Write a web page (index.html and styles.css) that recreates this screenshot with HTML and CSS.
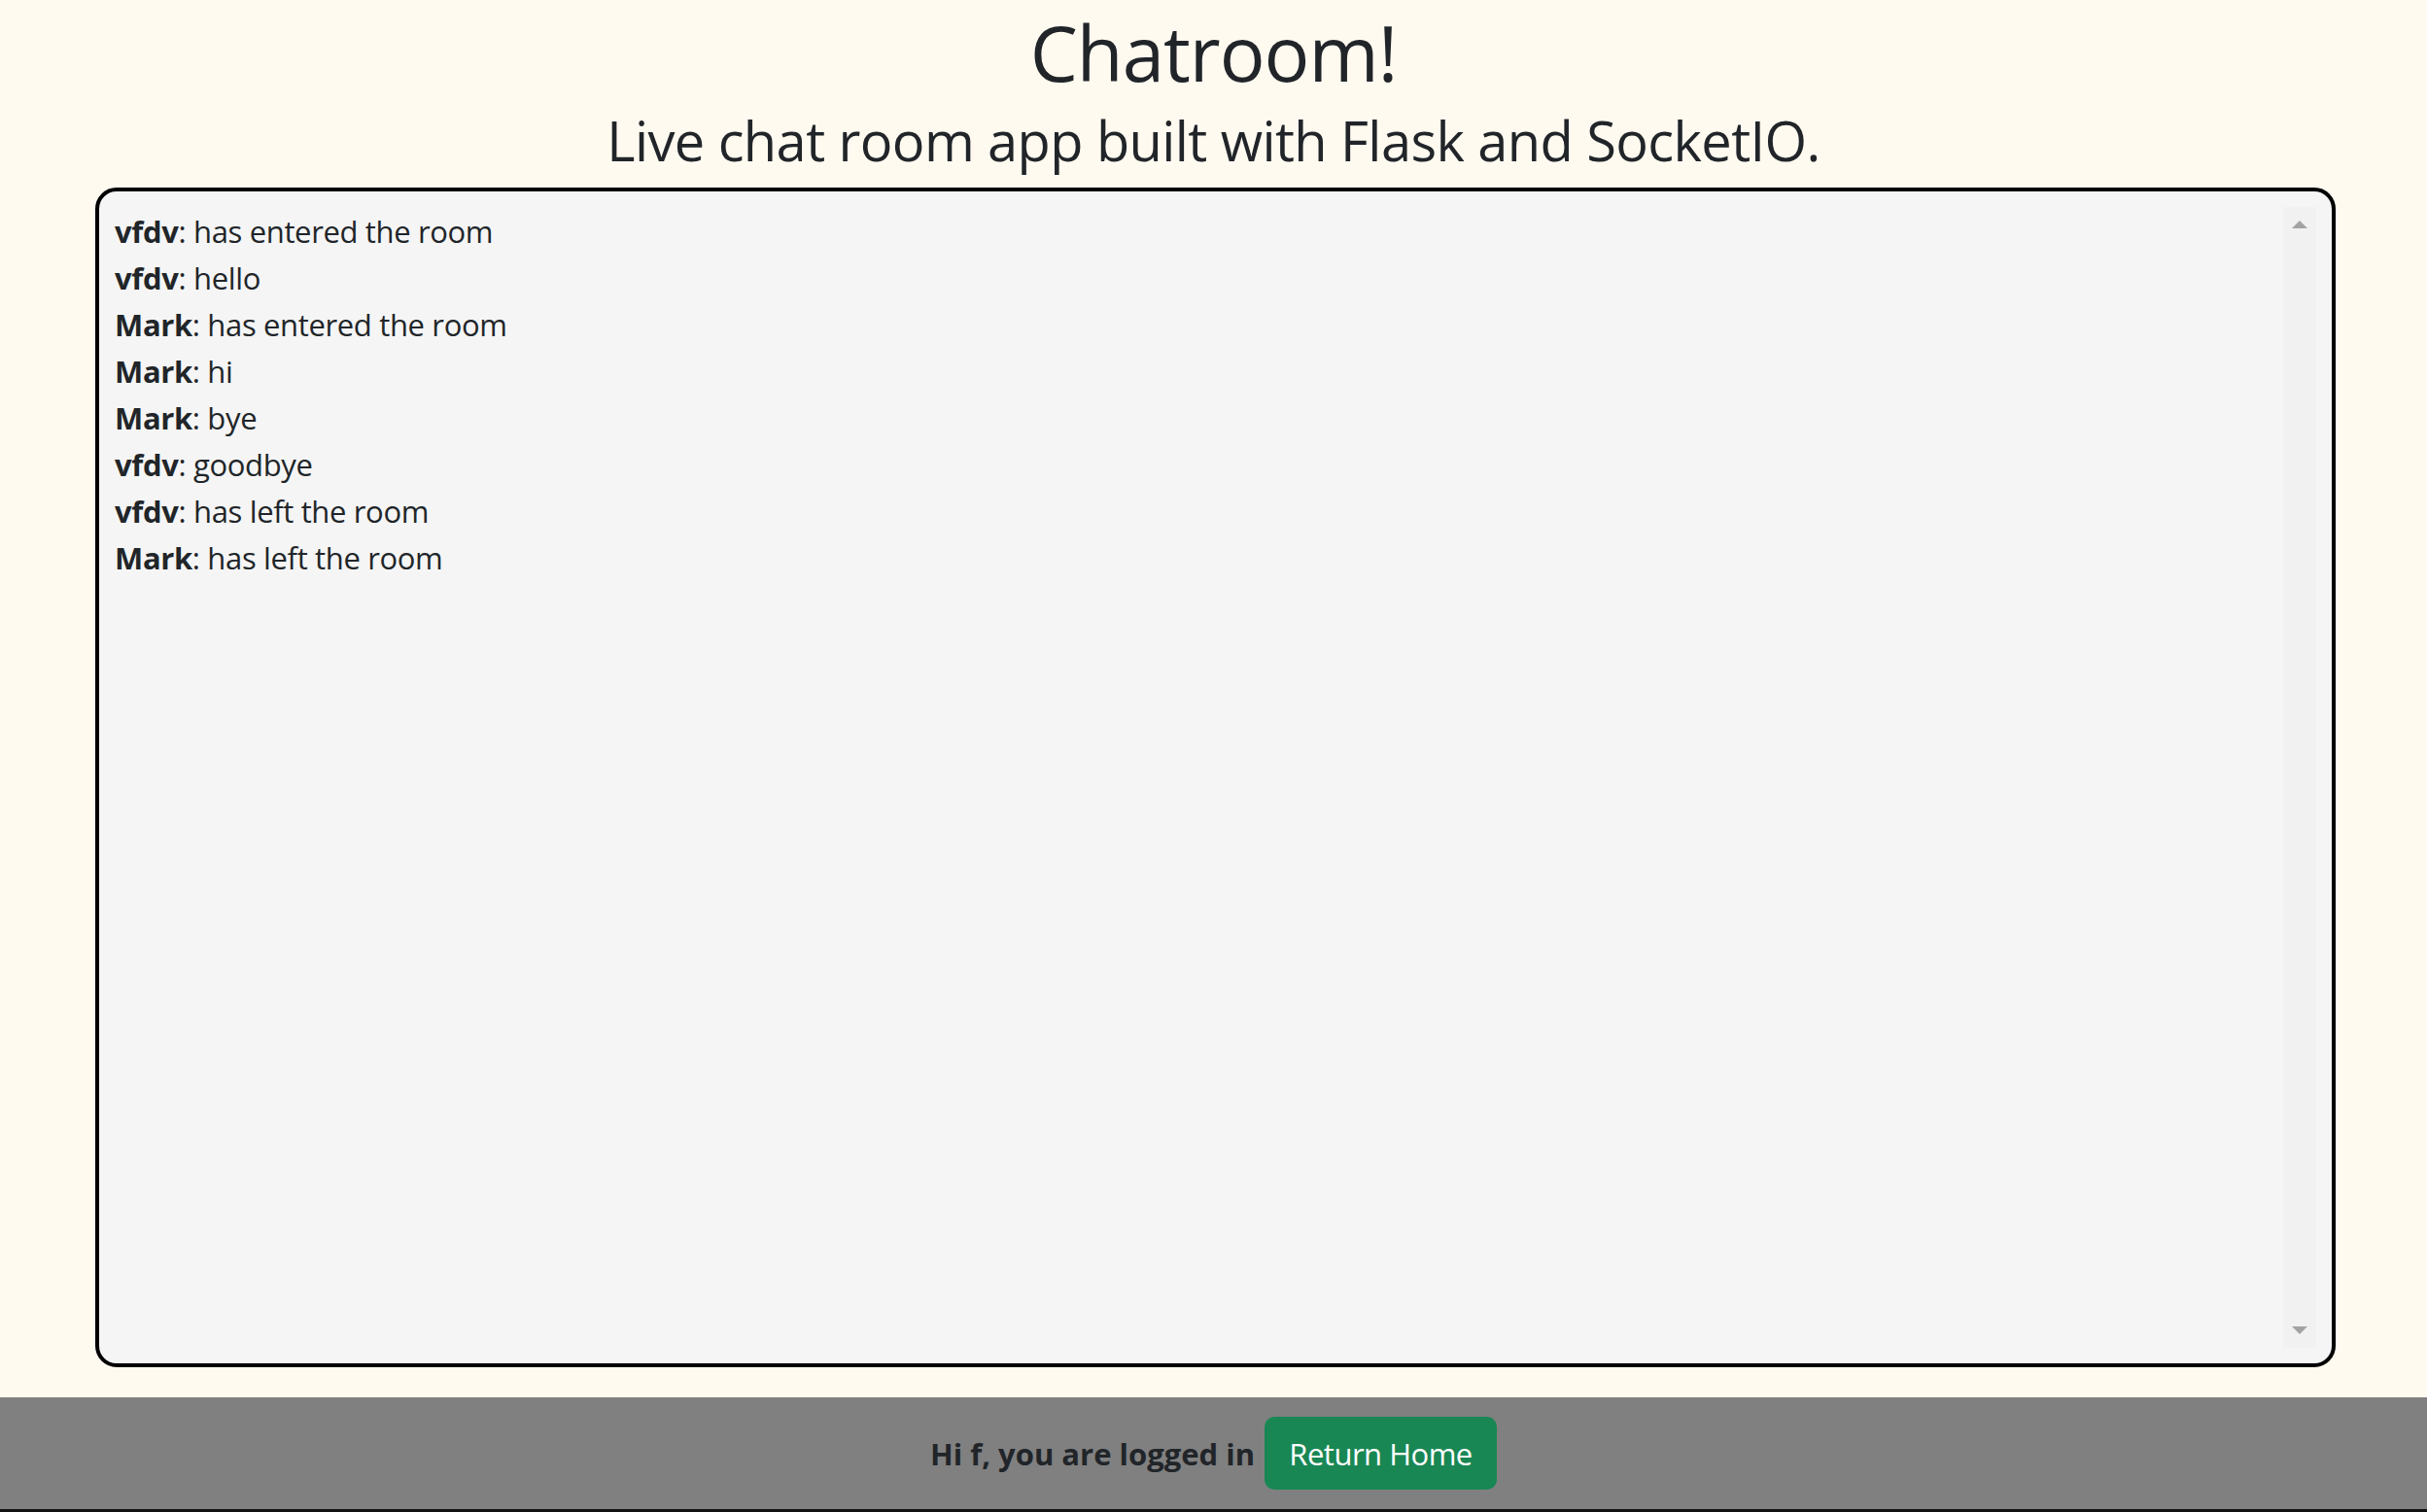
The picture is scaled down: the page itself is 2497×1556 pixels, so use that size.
FILE: index.html
```html
<!DOCTYPE html>
<html lang="en">
<head>
<meta charset="utf-8">
<title>Chatroom!</title>
<link rel="stylesheet" href="styles.css">
</head>
<body>
<header class="page-header">
  <h1 class="title">Chatroom!</h1>
  <h3 class="subtitle">Live chat room app built with Flask and SocketIO.</h3>
</header>
<main class="chatbox">
  <div class="chat-inner">
    <div class="messages">
      <div class="msg"><b>vfdv</b>: has entered the room</div>
      <div class="msg"><b>vfdv</b>: hello</div>
      <div class="msg"><b>Mark</b>: has entered the room</div>
      <div class="msg"><b>Mark</b>: hi</div>
      <div class="msg"><b>Mark</b>: bye</div>
      <div class="msg"><b>vfdv</b>: goodbye</div>
      <div class="msg"><b>vfdv</b>: has left the room</div>
      <div class="msg"><b>Mark</b>: has left the room</div>
    </div>
    <div class="scrollbar">
      <span class="arrow arrow-up"></span>
      <span class="arrow arrow-down"></span>
    </div>
  </div>
</main>
<footer class="footer">
  <span class="greeting">Hi f, you are logged in</span>
  <a class="btn-home" href="#">Return Home</a>
</footer>
</body>
</html>
```

FILE: styles.css
```css
html, body {
  margin: 0;
  padding: 0;
}
body {
  background: #fffaf0;
  color: #212529;
  font-family: "Open Sans", "Noto Sans", "Liberation Sans", sans-serif;
  height: 1556px;
  overflow: hidden;
}
.page-header {
  display: flex;
  flex-direction: column;
  align-items: center;
}
.title {
  margin: 0;
  padding-top: 6px;
  font-size: 78px;
  line-height: 96px;
  font-weight: 500;
  letter-spacing: -1px;
}
.subtitle {
  margin: 10px 0 0 0;
  font-size: 56px;
  line-height: 64px;
  font-weight: 500;
  letter-spacing: -0.6px;
}
.chatbox {
  margin: 17px 94px 0 98px;
  border: 4px solid #000;
  border-radius: 22px;
  background: #f5f5f5;
  padding: 16px;
}
.chat-inner {
  display: flex;
  height: 1174px;
}
.messages {
  flex: 1;
  padding-top: 1px;
  font-size: 31px;
  line-height: 48px;
  letter-spacing: -0.35px;
}
.msg b {
  font-weight: 700;
}
.scrollbar {
  width: 34px;
  background: #f1f1f1;
  display: flex;
  flex-direction: column;
  justify-content: space-between;
  align-items: center;
  padding: 14px 0;
  box-sizing: border-box;
}
.arrow {
  width: 0;
  height: 0;
  border-left: 8px solid transparent;
  border-right: 8px solid transparent;
}
.arrow-up {
  border-bottom: 8px solid #a3a3a3;
}
.arrow-down {
  border-top: 8px solid #a3a3a3;
}
.footer {
  margin-top: 31px;
  height: 115px;
  background: #808080;
  border-bottom: 3px solid #111;
  display: flex;
  align-items: center;
  justify-content: center;
  gap: 10px;
}
.greeting {
  font-size: 31px;
  font-weight: 700;
  color: #212529;
}
.btn-home {
  display: flex;
  align-items: center;
  justify-content: center;
  width: 239px;
  height: 75px;
  box-sizing: border-box;
  background: #198754;
  color: #fff;
  text-decoration: none;
  border-radius: 10px;
  font-size: 31px;
  letter-spacing: -0.5px;
}
```
